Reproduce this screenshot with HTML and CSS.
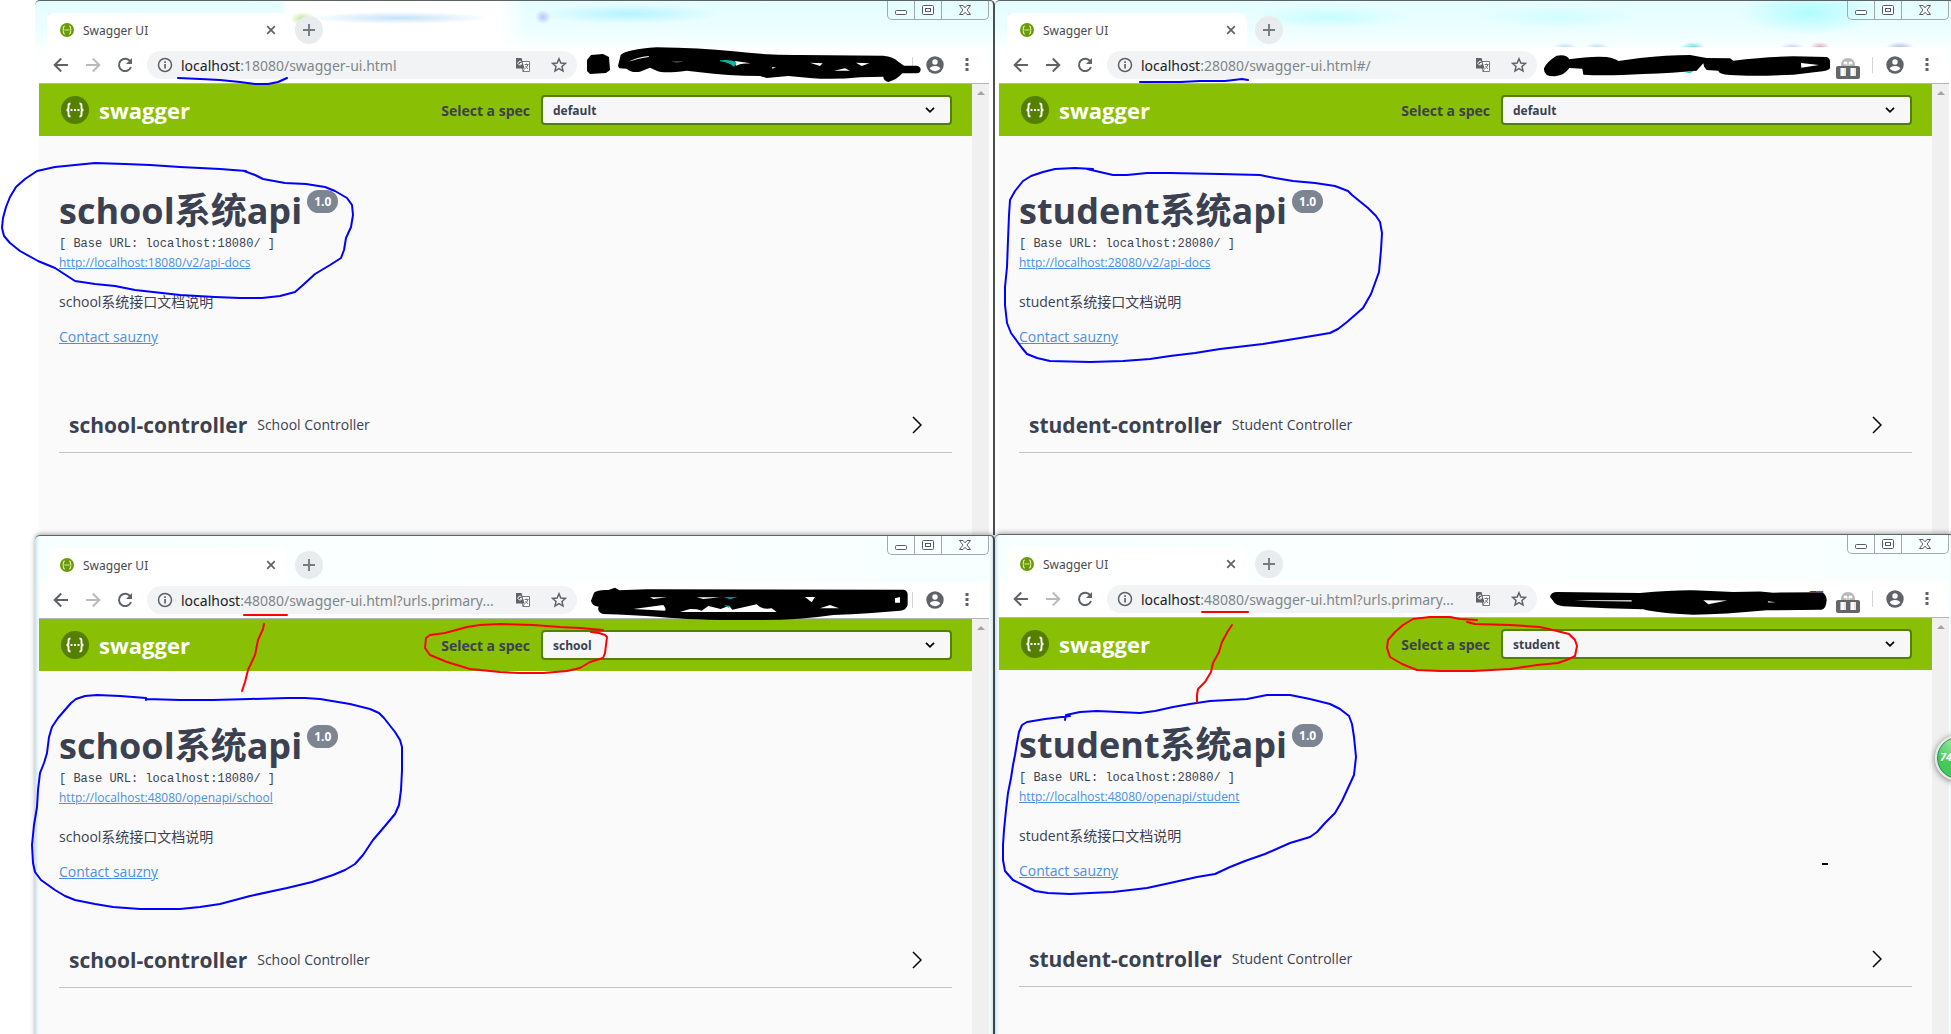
FILE: index.html
```html
<!DOCTYPE html>
<html lang="zh-CN">
<head>
<meta charset="utf-8">
<title>Swagger UI</title>
<link rel="stylesheet" href="styles.css">
</head>
<body>
<svg class="defs" aria-hidden="true">
  <symbol id="fav" viewBox="0 0 14 14"><circle cx="7" cy="7" r="7" fill="#6a9a08"/><path d="M5 3Q3.500 3 3.500 4.500V5.500Q3.500 7 2.500 7Q3.500 7 3.500 8.500V9.500Q3.500 11 5 11M9 3Q10.500 3 10.500 4.500V5.500Q10.500 7 11.500 7Q10.500 7 10.500 8.500V9.500Q10.500 11 9 11M4.500 7H9.500" fill="none" stroke="#dbeaa8" stroke-width="1.200"/></symbol>
  <symbol id="logo" viewBox="0 0 28 28"><circle cx="14" cy="14" r="14" fill="#547f00"/><path d="M9.500 7.500Q7.500 7.500 7.500 9.500V12Q7.500 14 5.500 14Q7.500 14 7.500 16V18.500Q7.500 20.500 9.500 20.500M18.500 7.500Q20.500 7.500 20.500 9.500V12Q20.500 14 22.500 14Q20.500 14 20.500 16V18.500Q20.500 20.500 18.500 20.500" fill="none" stroke="#fff" stroke-width="1.900"/><path d="M9.500 13h2v2h-2zM13 13h2v2h-2zM16.500 13h2v2h-2z" fill="#fff"/></symbol>
  <symbol id="x" viewBox="0 0 10 10"><path d="M1.200 1.200L8.800 8.800M8.800 1.200L1.200 8.800" stroke="#5f6368" stroke-width="1.700"/></symbol>
  <symbol id="plus" viewBox="0 0 12 12"><path d="M6 0V12M0 6H12" stroke="#777b80" stroke-width="1.900"/></symbol>
  <symbol id="arrow" viewBox="0 0 16 16"><path d="M15 8H2M8.200 1.500L1.700 8L8.200 14.500" fill="none" stroke="currentColor" stroke-width="2"/></symbol>
  <symbol id="reload" viewBox="0 0 16 16"><path d="M13.400 4.500A6.200 6.200 0 1 0 14 10" fill="none" stroke="#5f6368" stroke-width="2"/><path d="M15 1V7H9z" fill="#5f6368"/></symbol>
  <symbol id="info" viewBox="0 0 16 16"><circle cx="8" cy="8" r="6.500" fill="none" stroke="#5f6368" stroke-width="1.500"/><path d="M7.200 7h1.700v4.500H7.200zM7.200 4.300h1.700v1.700H7.200z" fill="#5f6368"/></symbol>
  <symbol id="translate" viewBox="0 0 14 14"><path d="M5 3.500h8.500v10H7z" fill="#fff" stroke="#75797d"/><path d="M0 0h5.500l3 10.500H0z" fill="#5f6368"/><path d="M5.500 4A1.900 1.900 0 1 0 5.800 5.500H4" fill="none" stroke="#fff"/><path d="M8.500 6.500h4M10.500 5.500v1M12 6.500Q11 9.500 9 10.500M9.500 8L12 11M7 13.500L8.500 10.500" fill="none" stroke="#75797d"/></symbol>
  <symbol id="star" viewBox="0 0 14 14"><path d="M7 1.500L8.600 5.300L12.700 5.600L9.600 8.300L10.500 12.300L7 10.200L3.500 12.300L4.400 8.300L1.300 5.600L5.400 5.300z" fill="none" stroke="#5f6368" stroke-width="1.300"/></symbol>
  <symbol id="user" viewBox="0 0 18 18"><circle cx="9" cy="9" r="8.700" fill="#5f6368"/><circle cx="9" cy="6" r="2.700" fill="#fff"/><path d="M3.800 12.800Q4.500 10 9 10Q13.500 10 14.200 12.800Q12 15.200 9 15.200Q6 15.200 3.800 12.800z" fill="#fff"/></symbol>
  <symbol id="dots" viewBox="0 0 4 14"><path d="M.5 0h3v3h-3zM.5 5h3v3h-3zM.5 10h3v3h-3z" fill="#5f6368"/></symbol>
  <symbol id="helmet" viewBox="0 0 24 22"><path d="M5 9Q5 1 12 1Q19 1 19 9z" fill="#b9b9b9"/><path d="M8 5h3v2H8zM13 5h3v2h-3zM10 8h4" fill="#fff" stroke="#fff" stroke-width=".6"/><rect y="9" width="24" height="13" rx="2" fill="#666"/><path d="M4 11h6v8H4zM14 11h6v8h-6z" fill="#fff"/><path d="M9 11v8M19 11v8" stroke="#e7c7a8"/><path d="M4.500 11v8M14.500 11v8" stroke="#a9b9e8"/></symbol>
  <symbol id="min" viewBox="0 0 12 5"><rect x=".5" y=".5" width="11" height="4" rx="1" fill="#fff" stroke="#555a6b"/></symbol>
  <symbol id="max" viewBox="0 0 12 10"><rect x=".5" y=".5" width="11" height="9" rx="1" fill="#fff" stroke="#555a6b"/><rect x="3.500" y="3.500" width="5" height="3" fill="#fff" stroke="#555a6b"/></symbol>
  <symbol id="close" viewBox="0 0 12 10"><path d="M.5 .5H4L6 2.800L8 .5H11.500L8 5L11.500 9.500H8L6 7.200L4 9.500H.5L4 5z" fill="#fff" stroke="#555a6b"/></symbol>
  <symbol id="down" viewBox="0 0 10 6"><path d="M1 .8L5 4.800L9 .8" fill="none" stroke="#000" stroke-width="1.700"/></symbol>
  <symbol id="right" viewBox="0 0 10 18"><path d="M1 1L9 9L1 17" fill="none" stroke="#000" stroke-width="1.500"/></symbol>
</svg>

<main class="desktop">
  <div class="column">
    <section class="window hazy">
      <header class="titlebar smear-a">
        <div class="tab"><svg class="i14"><use href="#fav"/></svg><span class="tab-name">Swagger UI</span><button class="bare" aria-label="Close tab"><svg class="i10"><use href="#x"/></svg></button></div>
        <button class="new-tab" aria-label="New tab"><svg class="i12"><use href="#plus"/></svg></button>
        <div class="controls"><button aria-label="Minimize"><svg class="min"><use href="#min"/></svg></button><button aria-label="Maximize"><svg class="cap"><use href="#max"/></svg></button><button aria-label="Close"><svg class="cap"><use href="#close"/></svg></button></div>
      </header>
      <nav class="toolbar">
        <button class="bare" aria-label="Back"><svg class="i16"><use href="#arrow"/></svg></button><button class="bare fwd off" aria-label="Forward"><svg class="i16"><use href="#arrow"/></svg></button><button class="bare" aria-label="Reload"><svg class="i16"><use href="#reload"/></svg></button>
        <div class="omnibox"><svg class="i16"><use href="#info"/></svg><span class="url"><b>localhost</b>:18080/swagger-ui.html</span><button class="bare" aria-label="Translate"><svg class="i14"><use href="#translate"/></svg></button><button class="bare" aria-label="Bookmark"><svg class="i16"><use href="#star"/></svg></button></div>
        <div class="extensions"></div>
        <button class="bare" aria-label="Profile"><svg class="i18"><use href="#user"/></svg></button><button class="bare" aria-label="Menu"><svg class="dots"><use href="#dots"/></svg></button>
      </nav>
      <div class="viewport">
        <div class="page">
          <div class="topbar"><svg class="i28"><use href="#logo"/></svg><span class="brand">swagger</span><label for="spec1">Select a spec</label><div class="picker"><select id="spec1"><option>default</option></select><svg class="down"><use href="#down"/></svg></div></div>
          <div class="info"><h1>school系统api<span class="version">1.0</span></h1><p class="base">[ Base URL: localhost:18080/ ]</p><a class="docs" href="#">http://localhost:18080/v2/api-docs</a><p class="about">school系统接口文档说明</p><a class="contact" href="#">Contact sauzny</a></div>
          <div class="tag"><h2>school-controller</h2><span>School Controller</span><button class="bare" aria-label="Expand"><svg class="right"><use href="#right"/></svg></button></div>
        </div>
        <div class="scrollbar"><i class="up"></i></div>
      </div>
    </section>
    <section class="window">
      <header class="titlebar">
        <div class="tab"><svg class="i14"><use href="#fav"/></svg><span class="tab-name">Swagger UI</span><button class="bare" aria-label="Close tab"><svg class="i10"><use href="#x"/></svg></button></div>
        <button class="new-tab" aria-label="New tab"><svg class="i12"><use href="#plus"/></svg></button>
        <div class="controls"><button aria-label="Minimize"><svg class="min"><use href="#min"/></svg></button><button aria-label="Maximize"><svg class="cap"><use href="#max"/></svg></button><button aria-label="Close"><svg class="cap"><use href="#close"/></svg></button></div>
      </header>
      <nav class="toolbar">
        <button class="bare" aria-label="Back"><svg class="i16"><use href="#arrow"/></svg></button><button class="bare fwd off" aria-label="Forward"><svg class="i16"><use href="#arrow"/></svg></button><button class="bare" aria-label="Reload"><svg class="i16"><use href="#reload"/></svg></button>
        <div class="omnibox"><svg class="i16"><use href="#info"/></svg><span class="url"><b>localhost</b>:48080/swagger-ui.html?urls.primary...</span><button class="bare" aria-label="Translate"><svg class="i14"><use href="#translate"/></svg></button><button class="bare" aria-label="Bookmark"><svg class="i16"><use href="#star"/></svg></button></div>
        <div class="extensions"></div>
        <button class="bare" aria-label="Profile"><svg class="i18"><use href="#user"/></svg></button><button class="bare" aria-label="Menu"><svg class="dots"><use href="#dots"/></svg></button>
      </nav>
      <div class="viewport">
        <div class="page">
          <div class="topbar"><svg class="i28"><use href="#logo"/></svg><span class="brand">swagger</span><label for="spec2">Select a spec</label><div class="picker"><select id="spec2"><option>school</option><option>student</option></select><svg class="down"><use href="#down"/></svg></div></div>
          <div class="info"><h1>school系统api<span class="version">1.0</span></h1><p class="base">[ Base URL: localhost:18080/ ]</p><a class="docs" href="#">http://localhost:48080/openapi/school</a><p class="about">school系统接口文档说明</p><a class="contact" href="#">Contact sauzny</a></div>
          <div class="tag"><h2>school-controller</h2><span>School Controller</span><button class="bare" aria-label="Expand"><svg class="right"><use href="#right"/></svg></button></div>
        </div>
        <div class="scrollbar"><i class="up"></i><i class="dn"></i></div>
      </div>
    </section>
  </div>
  <div class="column bleed">
    <section class="window hazy">
      <header class="titlebar smear-b">
        <div class="tab"><svg class="i14"><use href="#fav"/></svg><span class="tab-name">Swagger UI</span><button class="bare" aria-label="Close tab"><svg class="i10"><use href="#x"/></svg></button></div>
        <button class="new-tab" aria-label="New tab"><svg class="i12"><use href="#plus"/></svg></button>
        <div class="controls"><button aria-label="Minimize"><svg class="min"><use href="#min"/></svg></button><button aria-label="Maximize"><svg class="cap"><use href="#max"/></svg></button><button aria-label="Close"><svg class="cap"><use href="#close"/></svg></button></div>
      </header>
      <nav class="toolbar">
        <button class="bare" aria-label="Back"><svg class="i16"><use href="#arrow"/></svg></button><button class="bare fwd" aria-label="Forward"><svg class="i16"><use href="#arrow"/></svg></button><button class="bare" aria-label="Reload"><svg class="i16"><use href="#reload"/></svg></button>
        <div class="omnibox"><svg class="i16"><use href="#info"/></svg><span class="url"><b>localhost</b>:28080/swagger-ui.html#/</span><button class="bare" aria-label="Translate"><svg class="i14"><use href="#translate"/></svg></button><button class="bare" aria-label="Bookmark"><svg class="i16"><use href="#star"/></svg></button></div>
        <div class="extensions"><svg class="helmet"><use href="#helmet"/></svg></div>
        <button class="bare" aria-label="Profile"><svg class="i18"><use href="#user"/></svg></button><button class="bare" aria-label="Menu"><svg class="dots"><use href="#dots"/></svg></button>
      </nav>
      <div class="viewport">
        <div class="page">
          <div class="topbar"><svg class="i28"><use href="#logo"/></svg><span class="brand">swagger</span><label for="spec3">Select a spec</label><div class="picker"><select id="spec3"><option>default</option></select><svg class="down"><use href="#down"/></svg></div></div>
          <div class="info"><h1>student系统api<span class="version">1.0</span></h1><p class="base">[ Base URL: localhost:28080/ ]</p><a class="docs" href="#">http://localhost:28080/v2/api-docs</a><p class="about">student系统接口文档说明</p><a class="contact" href="#">Contact sauzny</a></div>
          <div class="tag"><h2>student-controller</h2><span>Student Controller</span><button class="bare" aria-label="Expand"><svg class="right"><use href="#right"/></svg></button></div>
        </div>
        <div class="scrollbar"><i class="up"></i></div>
      </div>
    </section>
    <section class="window raised">
      <header class="titlebar">
        <div class="tab"><svg class="i14"><use href="#fav"/></svg><span class="tab-name">Swagger UI</span><button class="bare" aria-label="Close tab"><svg class="i10"><use href="#x"/></svg></button></div>
        <button class="new-tab" aria-label="New tab"><svg class="i12"><use href="#plus"/></svg></button>
        <div class="controls"><button aria-label="Minimize"><svg class="min"><use href="#min"/></svg></button><button aria-label="Maximize"><svg class="cap"><use href="#max"/></svg></button><button aria-label="Close"><svg class="cap"><use href="#close"/></svg></button></div>
      </header>
      <nav class="toolbar">
        <button class="bare" aria-label="Back"><svg class="i16"><use href="#arrow"/></svg></button><button class="bare fwd off" aria-label="Forward"><svg class="i16"><use href="#arrow"/></svg></button><button class="bare" aria-label="Reload"><svg class="i16"><use href="#reload"/></svg></button>
        <div class="omnibox"><svg class="i16"><use href="#info"/></svg><span class="url"><b>localhost</b>:48080/swagger-ui.html?urls.primary...</span><button class="bare" aria-label="Translate"><svg class="i14"><use href="#translate"/></svg></button><button class="bare" aria-label="Bookmark"><svg class="i16"><use href="#star"/></svg></button></div>
        <div class="extensions"><svg class="helmet"><use href="#helmet"/></svg></div>
        <button class="bare" aria-label="Profile"><svg class="i18"><use href="#user"/></svg></button><button class="bare" aria-label="Menu"><svg class="dots"><use href="#dots"/></svg></button>
      </nav>
      <div class="viewport">
        <div class="page">
          <div class="topbar"><svg class="i28"><use href="#logo"/></svg><span class="brand">swagger</span><label for="spec4">Select a spec</label><div class="picker"><select id="spec4"><option>student</option><option>school</option></select><svg class="down"><use href="#down"/></svg></div></div>
          <div class="info"><h1>student系统api<span class="version">1.0</span></h1><p class="base">[ Base URL: localhost:28080/ ]</p><a class="docs" href="#">http://localhost:48080/openapi/student</a><p class="about">student系统接口文档说明</p><a class="contact" href="#">Contact sauzny</a></div>
          <div class="tag"><h2>student-controller</h2><span>Student Controller</span><button class="bare" aria-label="Expand"><svg class="right"><use href="#right"/></svg></button></div>
        </div>
        <div class="scrollbar"><i class="up"></i><i class="dn"></i></div>
      </div>
    </section>
  </div>

  <!-- Pen marks drawn over the four windows -->
  <svg class="ink" width="1951" height="1034" viewBox="0 0 1951 1034" aria-hidden="true">
    <g class="black">
      <path d="M591 55L603 54L609 57L610 70L606 73L590 74L587 71V60z"/>
      <g transform="translate(500) scale(.33333)">
        <path d="M354 198L362 165Q380 148 470 142Q600 144 700 154Q800 166 900 165L1150 167Q1180 170 1195 185L1212 197H1250Q1262 200 1262 208Q1262 220 1250 220H1207Q1190 240 1165 246Q1150 242 1150 230L1080 232Q1000 240 930 234L865 228L800 234L780 228Q680 228 600 217L560 212Q490 222 470 212L450 203L420 215Q395 220 380 206L358 205z"/>
        <path class="gap" d="M388 184Q410 172 447 168L446 171Q410 177 390 184zM513 185H552L530 187zM930 188L968 190L960 198zM1002 212L1035 205L1050 212zM1068 188L1108 190L1085 198zM815 202H828L818 206zM705 183L752 190Q725 190 708 197z"/>
        <path d="M660 181Q690 177 707 185L710 192L700 200Q690 188 660 184z" fill="#10b5a3"/>
      </g>
      <g transform="translate(500 400) scale(.33333)">
        <path d="M273 602L282 578Q295 568 325 570L345 563L358 571L440 568L1210 569Q1223 570 1223 585V615Q1218 632 1200 632Q1110 640 1000 645Q900 660 780 660Q600 662 480 651Q400 645 310 642Q290 636 296 620Q276 618 273 602z"/>
        <path class="gap" d="M450 592H500L460 597zM590 592L660 592L610 597zM400 627L490 615Q500 628 495 632zM570 627L590 628L605 632L625 618L662 627L687 617L697 629L770 613Q785 630 815 625L830 636H540zM915 591H945L935 607zM960 625L990 615L1017 625zM1185 595L1200 591V608H1185z"/>
        <path d="M670 592H712L690 597zM672 615L690 618L686 624z" fill="#0bb"/>
      </g>
      <g transform="translate(1440) scale(.33333)">
        <path d="M312 205Q320 185 350 167Q380 162 388 178Q450 168 500 171Q525 175 535 183L600 174Q680 165 750 165L800 174L870 175L880 182Q980 170 1060 169L1160 171Q1172 175 1170 190V205Q1165 214 1135 215L1060 224Q940 230 870 225Q835 222 835 212L800 210Q790 200 790 190L770 212Q700 219 610 222Q500 228 430 224L427 206L388 204Q375 225 345 229Q310 230 312 205z"/>
        <path class="gap" d="M1083 189L1137 195L1084 203z"/>
        <path d="M735 217L762 212L750 219z" fill="#0bb"/>
      </g>
      <g transform="translate(1440 500) scale(.33333 .34060)">
        <path d="M330 284Q332 270 352 270L600 273Q700 264 760 265L880 270L960 269L1000 272L1148 271Q1160 280 1160 295Q1158 320 1145 322L980 324Q850 336 760 337Q650 332 610 321L500 318L370 312Q345 308 340 297z"/>
        <path class="gap" d="M403 296L450 294L575 294V298zM790 294L862 295L805 306zM983 297L1008 300L985 301z"/>
        <path d="M1105 271L1113 267H1130V271z" fill="#c00"/><path d="M1130 267H1150V271H1130z" fill="#36c"/>
      </g>
      <path d="M1822 863h6v2h-6z"/>
    </g>
    <g class="blue">
      <polyline points="178,78 200,79 220,80 240,82 255,84 268,84 278,82 287,78"/>
      <polyline points="1140,82 1180,82 1200,81 1225,81 1242,79 1248,80"/>
      <polyline points="246,171 220,169 180,167 150,165 125,164 95,163 75,165 55,167 37,171 25,179 16,187 10,197 6,207 3,218 2,228 4,236 10,243 20,251 38,261 55,268 75,281 95,284 115,286 135,290 180,295 215,297 240,298 262,298 280,296 295,292 303,285 315,274 330,265 341,258 344,250 346,238 351,227 353,215 352,205 347,198 335,191 325,187 306,184 285,183 263,179 255,175 244,171"/>
      <polyline points="1093,169 1075,168 1055,169 1043,172 1031,176 1023,181 1015,191 1010,200 1009,215 1008,240 1007,267 1005,287 1005,305 1007,323 1011,333 1022,348 1027,354 1037,358 1050,361 1090,362 1123,361 1150,359 1170,356 1195,353 1220,349 1263,344 1300,338 1330,333 1338,329 1347,322 1363,308 1371,294 1379,272 1381,250 1382,233 1380,222 1376,216 1368,208 1352,195 1348,191 1335,186 1315,183 1293,181 1275,178 1260,175 1220,174 1170,173 1147,173 1127,175 1113,175 1100,172 1087,169"/>
      <polyline points="146,700 146,698 120,696 97,695 85,696 76,699 71,703 58,718 52,727 49,737 47,753 44,763 40,773 38,790 37,807 34,825 32,845 33,863 35,872 41,880 55,890 65,896 75,900 95,904 113,907 140,909 180,909 200,907 220,904 250,896 287,888 312,882 333,875 345,870 355,864 363,855 373,840 385,826 395,814 399,805 401,790 402,770 402,747 400,740 395,732 384,718 379,713 370,709 350,704 320,699 305,698 287,698 250,699 213,700 180,700 146,699"/>
      <polyline points="1065,720 1066,715 1080,712 1097,711 1140,713 1155,711 1173,707 1190,704 1210,701 1247,699 1267,695 1290,695 1310,699 1330,704 1340,709 1349,716 1352,724 1354,737 1356,757 1354,775 1348,788 1342,801 1335,813 1325,823 1317,832 1310,837 1290,843 1265,854 1245,861 1230,867 1215,874 1197,877 1170,883 1147,888 1113,892 1090,893 1070,894 1048,893 1035,891 1025,886 1013,880 1005,871 1003,860 1003,845 1004,830 1006,810 1008,793 1011,778 1013,765 1015,755 1017,743 1019,732 1022,725 1027,722 1045,719 1070,716"/>
    </g>
    <g class="red">
      <polyline points="244,615 287,615"/>
      <polyline points="1202,612 1248,612"/>
      <polyline points="264,624 263,629 258,640 255,655 248,670 245,682 242,691"/>
      <polyline points="1232,625 1228,631 1222,642 1219,652 1213,663 1211,672 1205,682 1198,689 1197,695 1197,702"/>
      <polyline points="603,630 580,628 560,627 533,625 500,624 480,625 467,627 445,633 430,635 426,638 425,648 430,655 447,662 470,669 500,672 520,673 543,673 567,671 580,668 590,662 603,658 605,653 607,637 605,635 599,633 591,632"/>
      <polyline points="1477,620 1460,619 1450,617 1430,617 1413,619 1403,625 1395,632 1388,640 1387,648 1390,657 1402,664 1417,670 1440,671 1473,671 1510,669 1537,665 1558,663 1569,659 1575,656 1577,646 1575,640 1569,634 1553,630 1540,627 1510,625 1475,624 1467,622"/>
    </g>
  </svg>
  <div class="meter">74</div>
</main>
</body>
</html>
```
FILE: styles.css
```css
* { box-sizing: border-box; }
body { margin: 0; background: #fff; color: #3b4151; font-family: "Open Sans", "Noto Sans CJK SC", sans-serif; font-size: 14px; }
button { font: inherit; }
svg { display: block; flex: none; }
h1, h2, p { margin: 0; }
.defs { position: absolute; width: 0; height: 0; }
.i10 { width: 10px; height: 10px; }
.i12 { width: 12px; height: 12px; }
.i14 { width: 14px; height: 14px; }
.i16 { width: 16px; height: 16px; }
.i18 { width: 18px; height: 18px; }
.i28 { width: 28px; height: 28px; }
.bare { display: block; border: 0; padding: 0; background: none; color: #5f6368; flex: none; }

.desktop { position: relative; min-height: 100vh; padding-left: 35px; overflow: hidden; display: flex; }
.column { flex: 1; display: flex; flex-direction: column; min-width: 0; }
.bleed { margin-right: -4px; }
.window { position: relative; display: flex; flex-direction: column; padding: 0 4px; border-top: 1px solid #5c6466; border-right: 2px solid #4a4e50; border-radius: 5px 5px 0 0; background: linear-gradient(90deg, #c5e3fa, #f8ffff 4px, #fbffff 50%, #f8ffff calc(100% - 4px), #e6f5f8); box-shadow: 0 -1px 5px rgba(0, 0, 0, .35); }
.window:last-child { flex: 1; }
.hazy { background: linear-gradient(#e4fdff, #ecfeff 28px, #f9ffff 46px, #fff 90px); box-shadow: none; }
.raised { margin-top: -1px; }

.titlebar { display: flex; height: 46px; padding-left: 8px; align-items: flex-start; }
.smear-a { background:
  radial-gradient(12px 7px at 264px 18px, #b9e58a, transparent),
  radial-gradient(90px 6px at 360px 17px, #c2e2f8, transparent),
  radial-gradient(8px 7px at 504px 16px, #b9c5f5, transparent),
  radial-gradient(90px 10px at 590px 13px, #b4f4ff, transparent),
  linear-gradient(90deg, transparent 240px, #fff 250px, #fff 460px, transparent 490px); }
.smear-b { background:
  radial-gradient(80px 12px at 330px 16px, #c6fdff, transparent),
  radial-gradient(80px 12px at 560px 16px, #d0fdff, transparent),
  radial-gradient(70px 22px at 810px 12px, #b0fcff, transparent),
  radial-gradient(12px 5px at 694px 46px, #68dcf0, transparent),
  radial-gradient(10px 5px at 821px 46px, #ef9fc0, transparent),
  radial-gradient(12px 4px at 566px 46px, #bddcf5, transparent),
  radial-gradient(12px 4px at 598px 46px, #bddcf5, transparent),
  radial-gradient(12px 4px at 793px 46px, #cbd0f2, transparent),
  radial-gradient(14px 5px at 901px 46px, #b9bfe6, transparent); }
.tab { display: flex; align-items: center; width: 240px; height: 34px; margin-top: 12px; padding: 0 11px 0 13px; gap: 9px; background: #fff; border-radius: 8px 8px 0 0; font-family: "Noto Sans", sans-serif; font-size: 12px; color: #45494d; }
.tab-name { flex: 1; }
.new-tab { display: grid; place-items: center; width: 28px; height: 28px; margin: 15px 0 0 8px; padding: 0; border: 0; border-radius: 50%; background: #e8ecef; }
.controls { display: flex; height: 19px; margin-left: auto; border: 1px solid #a3a9ab; border-top: 0; border-radius: 0 0 5px 5px; }
.controls button { display: grid; place-items: center; width: 27px; padding: 0; border: 0; border-right: 1px solid #a3a9ab; background: none; }
.controls button:last-child { width: 46px; border: 0; }
.min { width: 12px; height: 5px; margin-top: 5px; }
.cap { width: 12px; height: 10px; }

.toolbar { display: flex; align-items: center; height: 37px; padding: 0 20px 0 14px; background: #fff; border-bottom: 1px solid #b3b6b5; gap: 16px; }
.fwd { transform: scaleX(-1); }
.off { color: #b9bbbe; }
.omnibox { flex: 1; display: flex; align-items: center; height: 28px; margin-left: -2px; padding: 0 10px; background: #f1f3f4; border-radius: 14px; }
.url { flex: 1; padding-left: 8px; color: #80868b; font-family: "Noto Sans", sans-serif; font-size: 14px; white-space: nowrap; }
.url b { font-weight: 400; color: #202124; }
.omnibox .bare + .bare { margin-left: 21px; }
.extensions { width: 320px; height: 16px; display: flex; justify-content: flex-end; padding-right: 12px; border-right: 1px solid #d2d4d6; }
.extensions + .bare { margin-left: -3px; }
.helmet { width: 24px; height: 22px; }
.dots { width: 4px; height: 14px; margin-left: 5px; }

.viewport { flex: 1; display: flex; }
.page { flex: 1; background: #fafafa; }
.scrollbar { display: flex; flex-direction: column; justify-content: space-between; align-items: center; width: 17px; padding: 7px 0 6px; background: #f0f0f0; }
.up, .dn { border: 4px solid transparent; }
.up { border-top: 0; border-bottom-color: #a3a3a3; }
.dn { border-bottom: 0; border-top-color: #a3a3a3; }

.topbar { display: flex; align-items: center; height: 52px; padding: 0 20px 0 22px; background: #89bf04; }
.brand { flex: 1; margin-left: 10px; color: #fff; font-size: 22px; font-weight: 700; }
.topbar label { margin-right: 11px; font-size: 14px; font-weight: 700; }
.picker { position: relative; width: 411px; }
.picker select { appearance: none; display: block; width: 100%; height: 30px; padding: 0 10px; border: 2px solid #547f00; border-radius: 4px; background: #f7f7f7; color: #3b4151; font-family: "Open Sans", sans-serif; font-size: 12px; font-weight: 700; }
.down { position: absolute; right: 17px; top: 12px; width: 10px; height: 6px; }

.info { padding: 50px 20px; }
h1 { display: flex; align-items: flex-start; height: 51px; font-size: 36px; line-height: 50px; }
.version { height: 23px; margin: 4px 0 0 5px; padding: 0 7px; border-radius: 12px; background: #7d8492; color: #fff; font-size: 12px; line-height: 23px; }
.base { font-family: "Liberation Mono", monospace; font-size: 12px; line-height: 14px; }
.docs, .contact { display: block; width: max-content; color: #4990e2; }
.docs { margin-top: 3px; font-size: 12px; line-height: 18px; }
.about { margin-top: 20px; line-height: 20px; }
.contact { margin-top: 15px; line-height: 20px; }
.tag { display: flex; align-items: center; height: 56px; margin: 0 20px 82px; padding: 0 30px 0 10px; border-bottom: 1px solid #c3c4c8; }
h2 { font-size: 21px; }
.tag span { flex: 1; margin-left: 10px; }
.right { width: 10px; height: 18px; }

.ink { position: absolute; left: 0; top: 0; pointer-events: none; }
.ink polyline { fill: none; stroke-width: 2; stroke-linejoin: round; stroke-linecap: round; }
.blue { stroke: #00f; }
.red { stroke: #f00; }
.black { fill: #000; }
.gap { fill: #fff; }
.meter { position: absolute; top: 735px; right: -30px; width: 46px; height: 46px; padding-left: 3px; border: 2px solid #e8e8e8; border-radius: 50%; background: radial-gradient(circle at 50% 0, #b5efb5, #43c95b 60%); box-shadow: inset 0 0 0 1px #268a55, 0 1px 6px #777; color: #fff; font-size: 11px; font-weight: 700; font-style: italic; line-height: 40px; }
```
